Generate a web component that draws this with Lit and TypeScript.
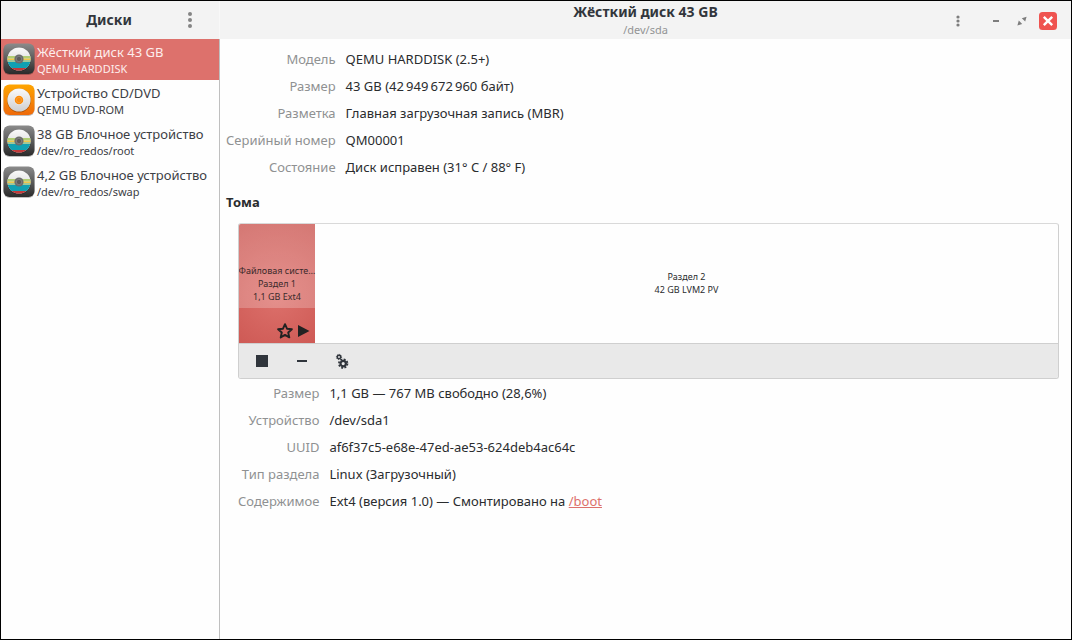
import { LitElement, html, css, svg, nothing } from "lit";
import { customElement, property, state } from "lit/decorators.js";
import { classMap } from "lit/directives/class-map.js";

interface Device {
  title: string;
  detail: string;
  kind: "disk" | "optical";
}

interface Field {
  label: string;
  value: string;
  link?: string;
}

const devices: Device[] = [
  { title: "Жёсткий диск 43 GB", detail: "QEMU HARDDISK", kind: "disk" },
  { title: "Устройство CD/DVD", detail: "QEMU DVD-ROM", kind: "optical" },
  { title: "38 GB Блочное устройство", detail: "/dev/ro_redos/root", kind: "disk" },
  { title: "4,2 GB Блочное устройство", detail: "/dev/ro_redos/swap", kind: "disk" },
];

const driveFields: Field[] = [
  { label: "Модель", value: "QEMU HARDDISK (2.5+)" },
  { label: "Размер", value: "43 GB (42\u2009949\u2009672\u2009960 байт)" },
  { label: "Разметка", value: "Главная загрузочная запись (MBR)" },
  { label: "Серийный номер", value: "QM00001" },
  { label: "Состояние", value: "Диск исправен (31° C / 88° F)" },
];

const volumeFields: Field[] = [
  { label: "Размер", value: "1,1 GB — 767 MB свободно (28,6%)" },
  { label: "Устройство", value: "/dev/sda1" },
  { label: "UUID", value: "af6f37c5-e68e-47ed-ae53-624deb4ac64c" },
  { label: "Тип раздела", value: "Linux (Загрузочный)" },
  { label: "Содержимое", value: "Ext4 (версия 1.0) — Смонтировано на ", link: "/boot" },
];

@customElement("drive-icon")
class DriveIcon extends LitElement {
  @property() kind: "disk" | "optical" = "disk";

  static styles = css`
    :host { display: block; flex: none; width: 32px; height: 32px; }
    svg { display: block; }
  `;

  render() {
    const optical = this.kind === "optical";
    return html`<svg width="32" height="32" viewBox="0 0 32 32" aria-hidden="true">
      <defs>
        <linearGradient id="case" x1="0" y1="0" x2="0" y2="1">
          <stop offset="0" stop-color=${optical ? "#ffa500" : "#8b8b8b"} />
          <stop offset="1" stop-color=${optical ? "#ee6a0b" : "#2b2b2b"} />
        </linearGradient>
        <linearGradient id="disc" x1="0" y1="0" x2="0" y2="1">
          <stop offset="0" stop-color="#fafafa" />
          <stop offset="1" stop-color="#cfcfcf" />
        </linearGradient>
        <clipPath id="round"><circle cx="16" cy="16" r="11.6" /></clipPath>
      </defs>
      <rect x="0.5" y="1" width="31" height="31" rx="6" fill="#000" opacity="0.25" />
      <rect x="0.5" y="0.5" width="31" height="30.5" rx="6" fill="url(#case)" />
      <circle cx="16" cy="16.4" r="12" fill="#000" opacity="0.25" />
      <circle cx="16" cy="16" r="11.6" fill="url(#disc)" />
      ${optical
        ? svg`<circle cx="16" cy="16" r="4.8" fill="#fff" opacity="0.5" />
            <circle cx="16" cy="16" r="4.3" fill="#fb8b0a" />
            <circle cx="16" cy="16" r="2.6" fill="#fb8b0a" stroke="#f7a850" stroke-width="0.6" />`
        : svg`<g clip-path="url(#round)">
              <rect x="3" y="13" width="26" height="2.600" fill="#b0cc74" />
              <rect x="3" y="15.600" width="26" height="1.400" fill="#f0c64a" />
              <rect x="3" y="17" width="26" height="2" fill="#9fc79a" />
              <rect x="3" y="19" width="26" height="6" fill="#10a0b2" />
              <rect x="3" y="25" width="26" height="4" fill="#c23a3a" />
            </g>
            <circle cx="16" cy="16" r="4.600" fill="#6c6c6c" />
            <circle cx="16" cy="16" r="2.700" fill="#5c5c5c" stroke="#8a8a8a" stroke-width="0.700" />`}
    </svg>`;
  }
}

@customElement("field-list")
class FieldList extends LitElement {
  @property({ attribute: false }) fields: Field[] = [];

  static styles = css`
    :host { display: block; }
    dl { display: grid; grid-template-columns: max-content 1fr; column-gap: 10px; margin: 0; line-height: 27px; }
    dt { text-align: right; color: #8f9192; }
    dd { margin: 0; color: #2a2c2e; }
    a { color: #dd716c; text-decoration: underline; }
  `;

  render() {
    return html`<dl>
      ${this.fields.map(
        (f) => html`<dt>${f.label}</dt>
          <dd>${f.value}${f.link ? html`<a href="#boot">${f.link}</a>` : nothing}</dd>`
      )}
    </dl>`;
  }
}

@customElement("app-root")
class AppRoot extends LitElement {
  @state() private selected = 0;

  static styles = css`
    :host {
      display: grid;
      grid-template-columns: 219px 1fr;
      box-sizing: border-box;
      min-height: 100vh;
      border: 1px solid #000;
      background: #fefefe;
      color: #2a2c2e;
      font: 13px/18px "Noto Sans", sans-serif;
    }
    button {
      display: flex;
      align-items: center;
      justify-content: center;
      margin: 0;
      padding: 0;
      border: 0;
      background: none;
      color: inherit;
      font: inherit;
    }
    svg { display: block; }
    h1, h2, p { margin: 0; }
    .side { display: flex; flex-direction: column; }
    .bar { display: flex; align-items: center; height: 38px; background: #f3f3f3; color: #32363c; }
    .side .bar { border-right: 1px solid #f8f8f8; }
    .side h2 { flex: 1; padding-left: 56px; text-align: center; font-size: 14px; }
    .menu { width: 58px; height: 32px; color: #858585; }
    .list { flex: 1; margin: 0; padding: 0; list-style: none; border-right: 1px solid #bfbfbf; }
    .device {
      width: 100%;
      height: 41px;
      padding: 4px 2px;
      gap: 2px;
      align-items: flex-start;
      justify-content: flex-start;
      text-align: left;
      color: #3c4045;
    }
    .device.on { background: #dd716c; color: #fdeeed; }
    .name { display: block; line-height: 18px; white-space: nowrap; }
    .sub { display: block; font-size: 11px; line-height: 15px; }
    .main { display: flex; flex-direction: column; min-width: 0; }
    .main .bar { display: grid; grid-template-columns: 1fr auto 1fr; }
    .title { grid-column: 2; text-align: center; }
    .title h1 { font-size: 14px; line-height: 20px; }
    .title p { font-size: 11px; line-height: 16px; color: #929495; padding-bottom: 1px; }
    .controls { display: flex; justify-content: flex-end; padding: 2px 10px 0 0; color: #7d7d7d; }
    .controls button { width: 26px; height: 26px; }
    .controls .more { margin-right: 12px; }
    .body { padding: 7px 12px 12px 6px; }
    .heading { padding: 12px 0; font-size: 13px; line-height: 18px; }
    .volumes { margin-left: 12px; border: 1px solid #cfcfcf; border-top-color: #d9d9d9; border-radius: 3px; overflow: hidden; }
    .map { display: grid; grid-template-columns: 76px 1fr; height: 119px; }
    .part {
      position: relative;
      flex-direction: column;
      min-width: 0;
      padding-bottom: 1px;
      font-size: 9px;
      line-height: 13px;
      white-space: nowrap;
    }
    .part.on {
      background: linear-gradient(to bottom, #ffffff38 84px, #ffffff00 84px),
        radial-gradient(circle at 50% 60%, #dd716c, #c9524d);
      color: #3b2a2b;
    }
    .marks { position: absolute; right: 5px; bottom: 3px; display: flex; align-items: center; gap: 4px; color: #222; }
    .tools { display: flex; height: 34px; border-top: 1px solid #cfcfcf; background: #e9e9e9; padding-left: 3px; color: #30353c; }
    .tools button { width: 40px; height: 34px; }
    .details { margin-left: 12px; padding-top: 1px; }
  `;

  private dots(size: number, r: number, step: number) {
    const c = size / 2;
    return html`<svg width=${size} height=${size} viewBox="0 0 ${size} ${size}" fill="currentColor" aria-hidden="true">
      ${[-step, 0, step].map((d) => svg`<circle cx=${c} cy=${c + d} r=${r} />`)}
    </svg>`;
  }

  render() {
    return html`
      <aside class="side">
        <header class="bar">
          <h2>Диски</h2>
          <button class="menu" aria-label="Меню приложения">${this.dots(18, 2, 6)}</button>
        </header>
        <ul class="list">
          ${devices.map(
            (d, i) => html`<li>
              <button
                class=${classMap({ device: true, on: i === this.selected })}
                @click=${() => (this.selected = i)}
              >
                <drive-icon .kind=${d.kind}></drive-icon>
                <span><span class="name">${d.title}</span><span class="sub">${d.detail}</span></span>
              </button>
            </li>`
          )}
        </ul>
      </aside>
      <main class="main">
        <header class="bar">
          <div class="title">
            <h1>Жёсткий диск 43 GB</h1>
            <p>/dev/sda</p>
          </div>
          <div class="controls">
            <button class="more" aria-label="Параметры диска">${this.dots(14, 1.6, 4)}</button>
            <button aria-label="Свернуть">
              <svg width="14" height="14" viewBox="0 0 14 14"><path d="M4 6h6v2H4z" fill="currentColor" /></svg>
            </button>
            <button aria-label="Развернуть">
              <svg width="14" height="14" viewBox="0 0 14 14" fill="currentColor">
                <path d="M6.800 4.200L11.600 2.800 10.200 7.600zM2.400 11.400L3.800 6.600 7.200 10z" />
              </svg>
            </button>
            <button aria-label="Закрыть">
              <svg width="18" height="18" viewBox="0 0 18 18">
                <rect width="18" height="18" rx="3.5" fill="#ef5350" />
                <path d="M4.8 4.8l8.4 8.4M13.2 4.8l-8.4 8.4" stroke="#fff" stroke-width="2.4" />
              </svg>
            </button>
          </div>
        </header>
        <div class="body">
          <field-list .fields=${driveFields}></field-list>
          <h2 class="heading">Тома</h2>
          <section class="volumes">
            <div class="map">
              <button class="part on">
                <span>Файловая систе…</span><span>Раздел 1</span><span>1,1 GB Ext4</span>
                <span class="marks">
                  <svg width="18" height="18" viewBox="0 0 18 18">
                    <path
                      d="M9 2.2l2 4.5 4.9.5-3.7 3.3 1.1 4.9L9 12.9l-4.3 2.5 1.1-4.9L2.100 7.200 7 6.700z"
                      fill="none" stroke="currentColor" stroke-width="1.9" stroke-linejoin="round"
                    />
                  </svg>
                  <svg width="12" height="12" viewBox="0 0 12 12"><path d="M0 0l11.500 6L0 12z" fill="currentColor" /></svg>
                </span>
              </button>
              <button class="part"><span>Раздел 2</span><span>42 GB LVM2 PV</span></button>
            </div>
            <div class="tools">
              <button aria-label="Отмонтировать раздел">
                <svg width="12" height="12" viewBox="0 0 12 12"><path d="M0 0h12v12H0z" fill="currentColor" /></svg>
              </button>
              <button aria-label="Удалить раздел">
                <svg width="12" height="12" viewBox="0 0 12 12"><path d="M1 5h10v2H1z" fill="currentColor" /></svg>
              </button>
              <button aria-label="Дополнительные параметры">
                <svg width="16" height="16" viewBox="0 0 16 16" fill="none" stroke="currentColor">
                  <circle cx="5" cy="4" r="1.700" stroke-width="1.500" />
                  <circle cx="5" cy="4" r="2.600" stroke-width="1" stroke-dasharray="1.020 1.020" />
                  <circle cx="9.200" cy="10.600" r="2.700" stroke-width="2.200" />
                  <circle cx="9.200" cy="10.600" r="4.300" stroke-width="1.700" stroke-dasharray="1.900 1.477" />
                </svg>
              </button>
            </div>
          </section>
          <field-list class="details" .fields=${volumeFields}></field-list>
        </div>
      </main>
    `;
  }
}
